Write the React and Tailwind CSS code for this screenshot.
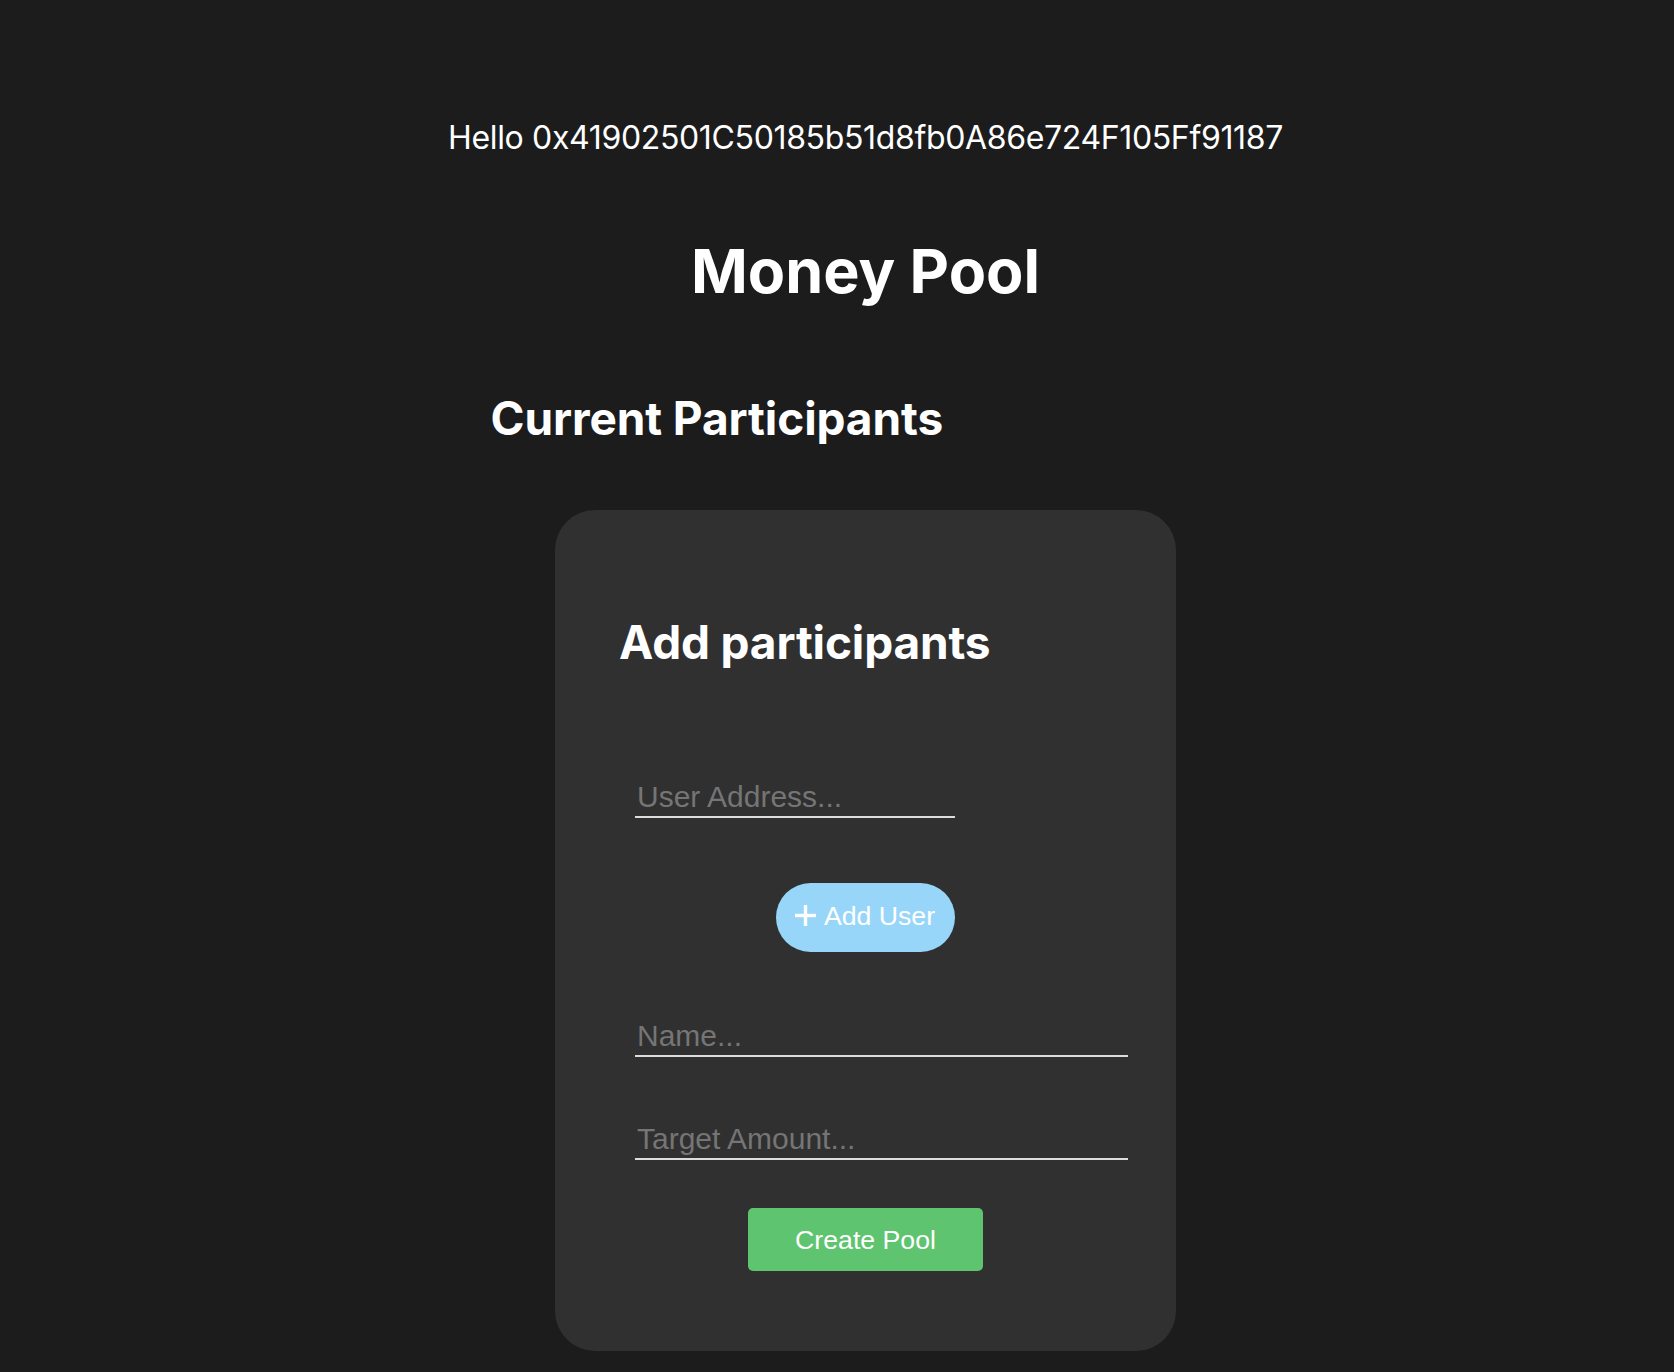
import { useState } from "react";

function PlusIcon() {
  return (
    <svg width="21" height="21" viewBox="0 0 21 21" fill="none" stroke="white" strokeWidth="3.4" strokeLinecap="butt">
      <line x1="10.5" y1="0" x2="10.5" y2="21" />
      <line x1="0" y1="10.5" x2="21" y2="10.5" />
    </svg>
  );
}

function Field({ placeholder, width, value, onChange, className = "" }) {
  return (
    <input
      type="text"
      placeholder={placeholder}
      value={value}
      onChange={(e) => onChange(e.target.value)}
      className={`block ${width} ml-[16px] h-[40px] px-[2px] bg-transparent border-0 border-b-2 border-[#dcdcdc] text-white text-[30px] leading-[36px] placeholder:text-[#757575] outline-none font-['Liberation_Sans',Arial,sans-serif] ${className}`}
    />
  );
}

export default function App() {
  const [address, setAddress] = useState("");
  const [name, setName] = useState("");
  const [target, setTarget] = useState("");

  return (
    <div className="min-h-screen bg-[#1c1c1c] text-white pl-[57px] pt-[118px] pb-[20px] font-['Inter','Noto_Sans',sans-serif]">
      <p className="text-center text-[32px] leading-[40px] tracking-[-0.35px] whitespace-nowrap">
        Hello 0x41902501C50185b51d8fb0A86e724F105Ff91187
      </p>

      <h1 className="mt-[76px] text-center text-[61px] leading-[74px] font-bold">Money Pool</h1>

      <div className="w-[750px] mx-auto">
        <h2 className="mt-[82px] text-[46px] leading-[56px] tracking-[-0.1px] font-bold">Current Participants</h2>

        <div className="mt-[64px] mx-auto w-[621px] rounded-[40px] bg-[#303030] pt-[104px] pb-[80px] px-[64px]">
          <h2 className="text-[46px] leading-[56px] tracking-[-0.15px] font-bold">Add participants</h2>

          <Field className="mt-[108px]" width="w-[320px]" placeholder="User Address..." value={address} onChange={setAddress} />

          <div className="flex justify-center mt-[65px]">
            <button className="flex items-center gap-[8px] h-[69px] pl-[19px] pr-[20px] pb-[4px] rounded-full bg-[#97d6f9] text-white text-[26.67px] font-['Liberation_Sans',Arial,sans-serif]">
              <PlusIcon />
              Add User
            </button>
          </div>

          <Field className="mt-[65px]" width="w-[493px]" placeholder="Name..." value={name} onChange={setName} />
          <Field className="mt-[63px]" width="w-[493px]" placeholder="Target Amount..." value={target} onChange={setTarget} />

          <div className="flex justify-center mt-[48px]">
            <button className="w-[235px] h-[63px] rounded-[5px] bg-[#5fc46f] text-white text-[26.67px] font-['Liberation_Sans',Arial,sans-serif]">
              Create Pool
            </button>
          </div>
        </div>
      </div>
    </div>
  );
}
